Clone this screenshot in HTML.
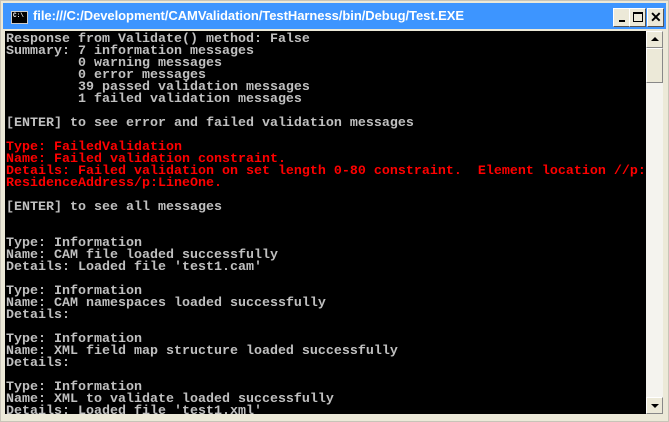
<html><head><style>
body{margin:0;width:669px;height:422px;overflow:hidden;background:#ece9d8;position:relative;font-family:"Liberation Sans",sans-serif}
.frame{position:absolute;left:0;top:0;width:667px;height:420px;border:1px solid #c8c4b8;background:#ece9d8}
.title{position:absolute;left:3px;top:3px;width:663px;height:26px;background:#3d95ff;color:#fff;font-weight:bold;font-size:13px}
.title span{position:absolute;left:30px;top:5px;letter-spacing:-0.05px}
.ico{position:absolute;left:8px;top:8px;width:15px;height:11px;background:#000;border:1px solid #ccc;color:#fff;font:bold 6px "Liberation Mono",monospace;line-height:8px;text-indent:1px}
.btn{position:absolute;top:5px;width:15px;height:17px;background:#ece9d8;border:1px solid;border-color:#fff #555 #555 #fff}
.con{position:absolute;left:5px;top:31px;width:641px;height:383px;background:#000;overflow:hidden}
pre{margin:0;position:absolute;left:1px;top:3px;font:bold 13.33px/12px "Liberation Mono",monospace;color:#c0c0c0}
.r{color:#ff0000}
.sb{position:absolute;left:646px;top:31px;width:17px;height:383px;background:#f4f3ee}
.sbb{position:absolute;left:0;width:15px;height:15px;background:#ece9d8;border:1px solid;border-color:#fff #888 #888 #fff}
</style></head><body>
<div class="frame"></div>
<div class="title"><div class="ico">C:\</div><span>file:///C:/Development/CAMValidation/TestHarness/bin/Debug/Test.EXE</span>
<div class="btn" style="left:610px"><div style="position:absolute;left:5px;top:11px;width:6px;height:2px;background:#000"></div></div>
<div class="btn" style="left:626px"><div style="position:absolute;left:3px;top:3px;width:8px;height:7px;border:1px solid #000;border-top-width:2px"></div></div>
<div class="btn" style="left:644px"><div style="position:absolute;left:2px;top:0px;font:bold 14px 'Liberation Sans';color:#000">✕</div></div>
</div>
<div class="con"><pre>Response from Validate() method: False
Summary: 7 information messages
         0 warning messages
         0 error messages
         39 passed validation messages
         1 failed validation messages

[ENTER] to see error and failed validation messages

<span class="r">Type: FailedValidation
Name: Failed validation constraint.
Details: Failed validation on set length 0-80 constraint.  Element location //p:
ResidenceAddress/p:LineOne.</span>

[ENTER] to see all messages


Type: Information
Name: CAM file loaded successfully
Details: Loaded file 'test1.cam'

Type: Information
Name: CAM namespaces loaded successfully
Details:

Type: Information
Name: XML field map structure loaded successfully
Details:

Type: Information
Name: XML to validate loaded successfully
Details: Loaded file 'test1.xml'</pre></div>
<div class="sb">
<div class="sbb" style="top:0"><div style="position:absolute;left:4px;top:5px;border:4px solid transparent;border-top:0;border-bottom:4px solid #000"></div></div>
<div class="sbb" style="top:17px;height:33px"></div>
<div class="sbb" style="top:366px"><div style="position:absolute;left:4px;top:6px;border:4px solid transparent;border-bottom:0;border-top:4px solid #000"></div></div>
</div>
</body></html>
